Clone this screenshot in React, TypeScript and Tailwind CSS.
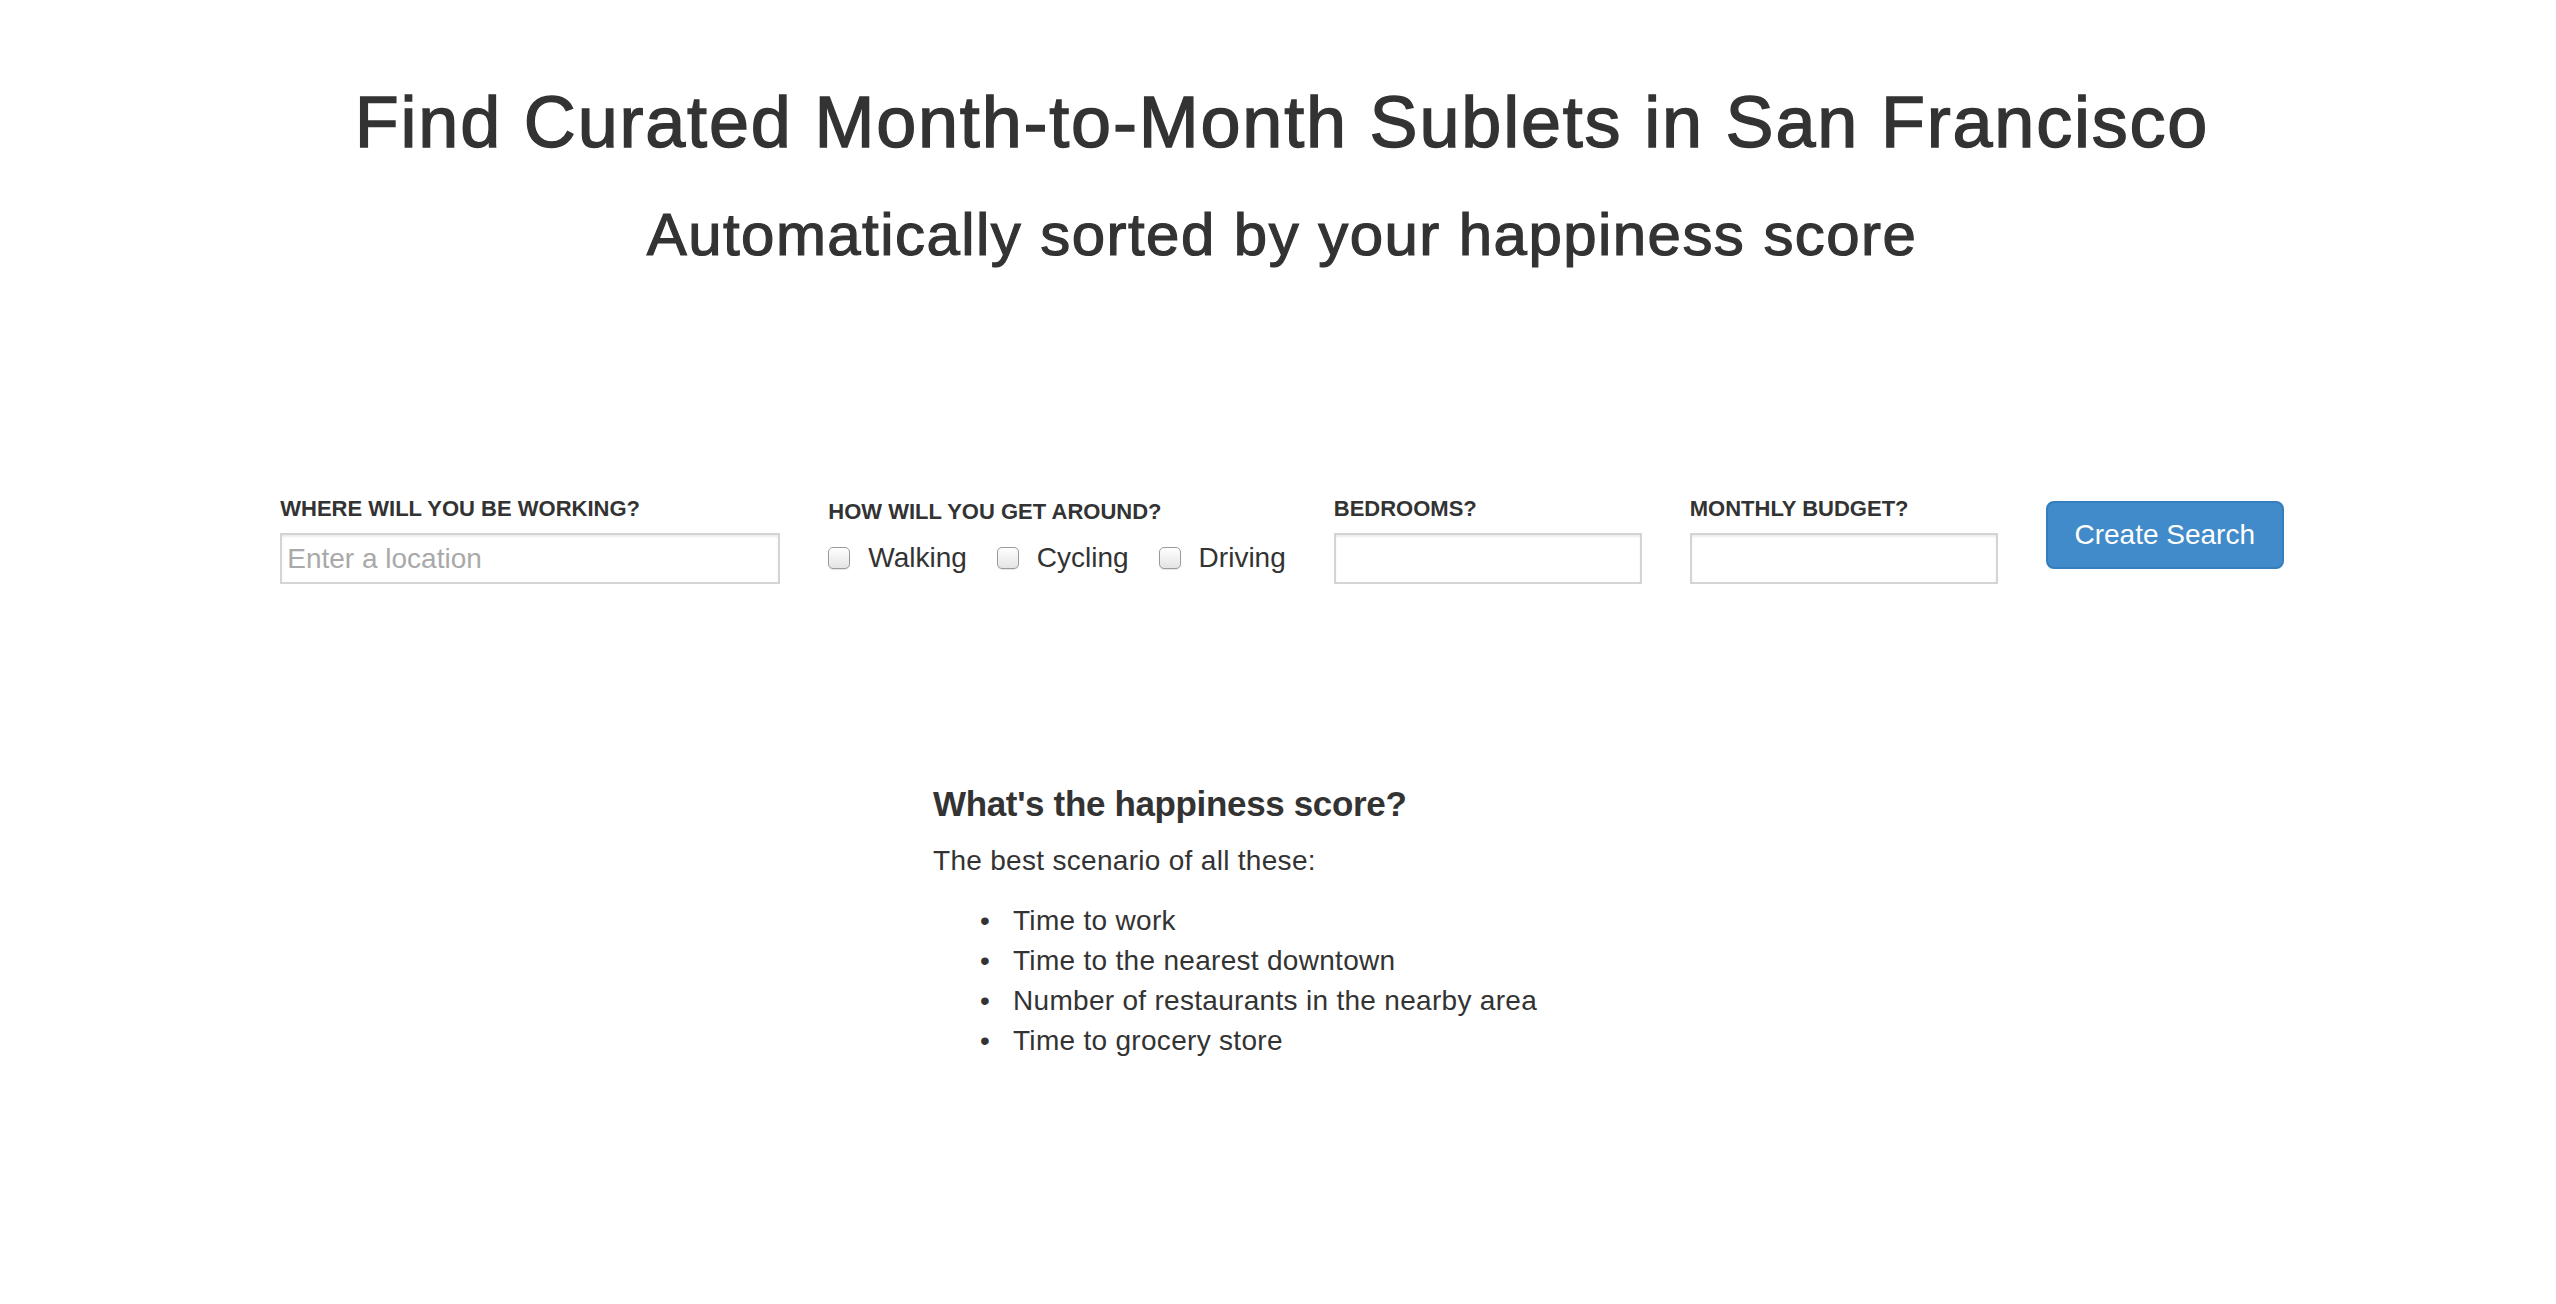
import React from 'react';

const fieldLabel = 'block h-[30px] mb-[9px] text-[22px] leading-[30px] font-bold uppercase whitespace-nowrap';
const textInput =
  'block h-[51px] border-2 border-[#d4d4d4] bg-white px-[5px] text-[28px] text-[#333] shadow-[inset_0_2px_2px_rgba(0,0,0,0.08)] outline-none placeholder:text-[#a9a9a9]';

const modes = ['Walking', 'Cycling', 'Driving'];

const scoreFactors = [
  'Time to work',
  'Time to the nearest downtown',
  'Number of restaurants in the nearby area',
  'Time to grocery store'
];

const App: React.FC = () => {
  return (
    <div className="min-h-screen bg-white text-[#333] font-['Liberation_Sans',Arial,sans-serif]">
      <header className="pt-[83px] pl-[8px] text-center">
        <h1 className="text-[72px] leading-[1.1] tracking-[0.025em] [-webkit-text-stroke:1.4px_#333]">
          Find Curated Month-to-Month Sublets in San Francisco
        </h1>
        <h2 className="mt-[40px] text-[60px] leading-[1.1] tracking-[0.024em] [-webkit-text-stroke:1.2px_#333]">
          Automatically sorted by your happiness score
        </h2>
      </header>

      {/* search form */}
      <form
        className="mt-[226px] flex items-start justify-center gap-[48px] pl-[8px]"
        onSubmit={(e) => e.preventDefault()}
      >
        <div>
          <label className={fieldLabel} htmlFor="work">Where will you be working?</label>
          <input id="work" type="text" placeholder="Enter a location" className={`${textInput} w-[500px]`} />
        </div>

        <div className="pt-[3px]">
          <span className={`${fieldLabel} mb-[11px]`}>How will you get around?</span>
          <div className="flex gap-[30px]">
            {modes.map((mode) => (
              <label key={mode} className="flex h-[40px] items-center text-[28px] leading-[40px] cursor-pointer">
                <input
                  type="checkbox"
                  className="h-[22px] w-[22px] appearance-none rounded-[5px] border border-[#9a9a9a] bg-gradient-to-b from-white to-[#e4e4e4] shadow-[0_1px_1px_rgba(0,0,0,0.1)] checked:bg-[#428bca]"
                />
                <span className="ml-[18px]">{mode}</span>
              </label>
            ))}
          </div>
        </div>

        <div>
          <label className={fieldLabel} htmlFor="bedrooms">Bedrooms?</label>
          <input id="bedrooms" type="text" className={`${textInput} w-[308px]`} />
        </div>

        <div>
          <label className={fieldLabel} htmlFor="budget">Monthly budget?</label>
          <input id="budget" type="text" className={`${textInput} w-[308px]`} />
        </div>

        <button
          type="submit"
          className="mt-[7px] h-[68px] w-[238px] rounded-[8px] border-2 border-[#357ebd] bg-[#428bca] text-[28px] text-white"
        >
          Create Search
        </button>
      </form>

      <section className="mx-auto mt-[201px] w-[690px] tracking-[0.3px]">
        <h4 className="mb-[17px] text-[35px] leading-[1.1] font-bold tracking-[-0.01em]">
          What's the happiness score?
        </h4>
        <p className="mb-[20px] text-[28px] leading-[40px]">The best scenario of all these:</p>
        <ul className="pl-[47px] text-[28px] leading-[40px]">
          {scoreFactors.map((item) => (
            <li key={item} className="flex">
              <span className="w-[33px] shrink-0">•</span>
              <span>{item}</span>
            </li>
          ))}
        </ul>
      </section>
    </div>
  );
};

export default App;
